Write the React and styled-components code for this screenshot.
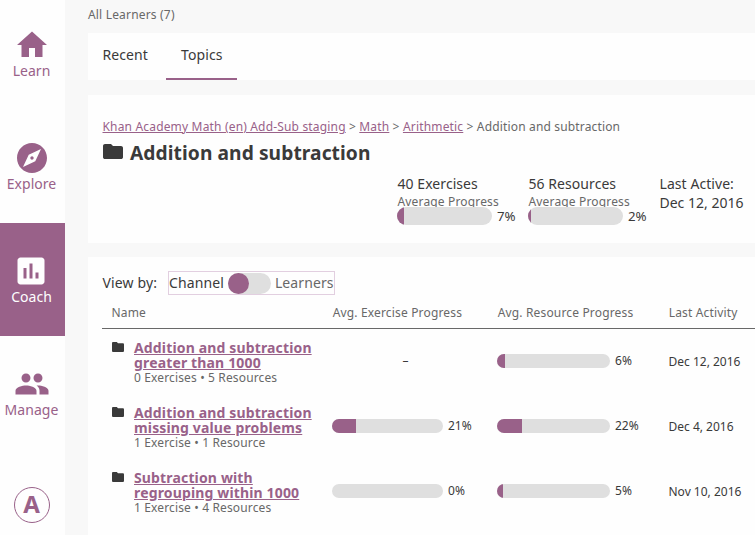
import React from 'react';
import styled, { createGlobalStyle } from 'styled-components';

const purple = '#996189';
const dark = '#3a3a3a';
const grey = '#686868';
const track = '#dfdfdf';

const GlobalStyle = createGlobalStyle`
  * { box-sizing: border-box; }
  body {
    margin: 0;
    overflow: hidden;
    background: #f8f8f8;
    color: ${dark};
    font-family: "Noto Sans", sans-serif;
    font-size: 14px;
  }
`;

const Page = styled.div`
  display: flex;
  height: 535px;
  overflow: hidden;
`;

const Sidebar = styled.nav`
  display: flex;
  flex-direction: column;
  width: 65px;
  flex: none;
  background: #fefefe;
`;

const NavItem = styled.a`
  display: flex;
  flex-direction: column;
  align-items: center;
  flex: none;
  height: 113px;
  padding: 30px 2px 0 0;
  line-height: 19px;
  color: ${(p) => (p.$active ? '#fefefe' : purple)};
  background: ${(p) => (p.$active ? purple : 'transparent')};

  &:first-child { margin-top: -3px; }
`;

const NavLabel = styled.span`
  margin-top: -2px;
  letter-spacing: 0.04px;
`;

const Icon = styled.svg`
  display: block;
  flex: none;
  width: ${(p) => p.$size}px;
  height: ${(p) => p.$size}px;
  margin-left: ${(p) => p.$shift}px;
  fill: currentColor;
`;

const Avatar = styled.div`
  width: 36px;
  height: 36px;
  margin: 38px 0 0 14px;
  padding-right: 1px;
  border: 1px solid ${purple};
  border-radius: 50%;
  color: ${purple};
  font-size: 24px;
  font-weight: 700;
  line-height: 32px;
  text-align: center;
`;

const Main = styled.main`
  flex: none;
  width: 690px;
  padding: 6px 0 0 23px;
`;

const Context = styled.div`
  height: 27px;
  font-size: 12px;
  letter-spacing: 0.18px;
  line-height: 17px;
  color: ${grey};
`;

const Card = styled.section`
  background: #fefefe;
`;

const Tabs = styled(Card)`
  display: flex;
  gap: 4px;
  height: 47px;
  margin-bottom: 15px;
`;

const Tab = styled.a`
  width: ${(p) => (p.$active ? 71 : 74)}px;
  padding: 12px 0 0 ${(p) => (p.$active ? 15 : 14.5)}px;
  line-height: 20px;
  letter-spacing: 0.1px;
  border-bottom: 2px solid ${(p) => (p.$active ? purple : 'transparent')};
`;

const Summary = styled(Card)`
  height: 148px;
  margin-bottom: 14px;
  padding: 23px 0 0 14.5px;
`;

const Crumbs = styled.div`
  font-size: 12px;
  letter-spacing: 0.155px;
  line-height: 17px;
  color: ${grey};
`;

const CrumbLink = styled.a`
  color: ${purple};
  letter-spacing: 0.17px;
  text-decoration: underline;
`;

const Title = styled.h1`
  display: flex;
  gap: 7px;
  margin: 5px 0 0;
  padding-left: 0.5px;
  font-size: 19.2px;
  letter-spacing: 0.08px;
  line-height: 26px;
`;

const Stats = styled.div`
  display: flex;
  margin: 8px 0 0 294.5px;
  line-height: 19px;
  letter-spacing: 0.06px;
`;

const Stat = styled.div`
  flex: none;
  width: 131px;
`;

const StatText = styled.div`
  padding-left: 0.5px;
`;

const StatDate = styled(StatText)`
  letter-spacing: 0;
`;

const StatCaption = styled.div`
  height: 14px;
  padding-left: 0.5px;
  font-size: 12px;
  letter-spacing: 0.16px;
  line-height: 17px;
  color: ${grey};
`;

const Meter = styled.div`
  display: flex;
  align-items: center;
  gap: 5px;
  font-size: ${(p) => (p.$large ? 13.3 : 12)}px;
  line-height: 18px;
  letter-spacing: 0;
`;

const Track = styled.div`
  flex: none;
  width: ${(p) => p.$width}px;
  height: ${(p) => (p.$large ? 18 : 14)}px;
  border-radius: 9px;
  overflow: hidden;
  background: ${track};
`;

const Fill = styled.div`
  height: 100%;
  background: ${purple};
`;

const Report = styled(Card)`
  height: 278px;
  padding: 14px 0 0 14px;
`;

const ViewBy = styled.div`
  display: flex;
  align-items: center;
  height: 24px;
`;

const ViewLabel = styled.span`
  width: 66px;
  padding-left: 0.5px;
  line-height: 20px;
  letter-spacing: 0.15px;
  margin-top: -1px;
`;

const Toggle = styled.div`
  display: flex;
  align-items: center;
  width: 167px;
  height: 24px;
  border: 1px solid #e2cfe0;
  line-height: 20px;
  letter-spacing: 0.1px;
`;

const Switch = styled.span`
  flex: none;
  width: 43px;
  height: 21px;
  margin: 0 4px;
  border-radius: 11px;
  background: ${track};
`;

const Knob = styled.span`
  display: block;
  width: 21px;
  height: 21px;
  border-radius: 50%;
  background: ${purple};
`;

const Muted = styled.span`
  color: ${grey};
`;

const Row = styled.div`
  display: grid;
  grid-template-columns: 230px 165px 171px 90px;
  height: 65px;
  font-size: 12px;
`;

const HeaderRow = styled(Row)`
  height: 34px;
  padding-top: 9px;
  line-height: 17px;
  letter-spacing: 0.16px;
  color: ${grey};
  border-bottom: 1px solid ${grey};
`;

const HeaderCell = styled.div`
  padding-left: ${(p) => (p.$first ? 9.5 : 0.7)}px;
  white-space: nowrap;
`;

const NameCell = styled.div`
  display: flex;
  gap: 8px;
  padding: 11px 0 0 10px;
`;

const FolderSlot = styled.span`
  flex: none;
  width: 14px;
`;

const TopicLink = styled.a`
  display: block;
  width: 190px;
  font-size: 14px;
  font-weight: 700;
  line-height: 15px;
  letter-spacing: 0.15px;
  color: ${purple};
  text-decoration: underline;
`;

const Counts = styled.div`
  line-height: 15px;
  letter-spacing: 0.14px;
  color: ${grey};
`;

const Cell = styled.div`
  padding-top: 23px;
  line-height: 18px;
`;

const DateCell = styled(Cell)`
  padding: 24px 0 0 0.5px;
`;

const Dash = styled.div`
  width: 147px;
  text-align: center;
`;

const paths = {
  home: 'M10 20v-6h4v6h5v-8h3L12 3 2 12h3v8z',
  explore:
    'M12 10.9c-.61 0-1.1.49-1.1 1.1s.49 1.1 1.1 1.1c.61 0 1.1-.49 1.1-1.1s-.49-1.1-1.1-1.1zM12 2C6.48 2 2 6.48 2 12s4.48 10 10 10 10-4.48 10-10S17.52 2 12 2zm2.19 12.19L6 18l3.81-8.19L18 6l-3.81 8.19z',
  coach:
    'M19 3H5c-1.1 0-2 .9-2 2v14c0 1.1.9 2 2 2h14c1.1 0 2-.9 2-2V5c0-1.1-.9-2-2-2zM9 17H7v-7h2v7zm4 0h-2V7h2v10zm4 0h-2v-4h2v4z',
  people:
    'M16 11c1.66 0 2.99-1.34 2.99-3S17.66 5 16 5c-1.66 0-3 1.34-3 3s1.34 3 3 3zm-8 0c1.66 0 2.99-1.34 2.99-3S9.66 5 8 5C6.34 5 5 6.34 5 8s1.34 3 3 3zm0 2c-2.33 0-7 1.17-7 3.5V19h14v-2.5c0-2.33-4.67-3.5-7-3.5zm8 0c-.29 0-.62.02-.97.05 1.16.84 1.97 1.97 1.97 3.45V19h6v-2.5c0-2.33-4.67-3.5-7-3.5z',
  folder:
    'M10 4H4c-1.1 0-1.99.9-1.99 2L2 18c0 1.1.9 2 2 2h16c1.1 0 2-.9 2-2V8c0-1.1-.9-2-2-2h-8l-2-2z',
};

const Glyph = ({ name, size, shift }) => (
  <Icon viewBox="0 0 24 24" $size={size} $shift={shift}>
    <path d={paths[name]} />
  </Icon>
);

const FolderIcon = styled.svg`
  display: block;
  flex: none;
  width: ${(p) => p.$w}px;
  height: ${(p) => p.$h}px;
  margin-top: ${(p) => p.$top}px;
  fill: ${dark};
`;

const Folder = ({ w, h, top }) => (
  <FolderIcon viewBox="2 4 20 16" preserveAspectRatio="none" $w={w} $h={h} $top={top}>
    <path d={paths.folder} />
  </FolderIcon>
);

const Progress = ({ value, width, large }) => (
  <Meter $large={large}>
    <Track $width={width} $large={large}>
      <Fill style={{ width: Math.ceil((value * width) / 100 + (value && value < 7 ? 0.3 : 0)) }} />
    </Track>
    <span>{value}%</span>
  </Meter>
);

const nav = [
  { label: 'Learn', icon: 'home', shift: 1 },
  { label: 'Explore', icon: 'explore', shift: 1 },
  { label: 'Coach', icon: 'coach', shift: -1, active: true },
  { label: 'Manage', icon: 'people', shift: 1 },
];

const topics = [
  { lines: ['Addition and subtraction', 'greater than 1000'], counts: '0 Exercises • 5 Resources', exercise: null, resource: 6, date: 'Dec 12, 2016' },
  { lines: ['Addition and subtraction', 'missing value problems'], counts: '1 Exercise • 1 Resource', exercise: 21, resource: 22, date: 'Dec 4, 2016' },
  { lines: ['Subtraction with', 'regrouping within 1000'], counts: '1 Exercise • 4 Resources', exercise: 0, resource: 5, date: 'Nov 10, 2016' },
];

export default function App() {
  return (
    <Page>
      <GlobalStyle />
      <Sidebar>
        {nav.map((n) => (
          <NavItem key={n.label} $active={n.active}>
            <Glyph name={n.icon} size={36} shift={n.shift} />
            <NavLabel>{n.label}</NavLabel>
          </NavItem>
        ))}
        <Avatar>A</Avatar>
      </Sidebar>
      <Main>
        <Context>All Learners (7)</Context>
        <Tabs>
          <Tab>Recent</Tab>
          <Tab $active>Topics</Tab>
        </Tabs>
        <Summary>
          <Crumbs>
            <CrumbLink>Khan Academy Math (en) Add-Sub staging</CrumbLink> &gt; <CrumbLink>Math</CrumbLink> &gt;{' '}
            <CrumbLink>Arithmetic</CrumbLink> &gt; Addition and subtraction
          </Crumbs>
          <Title>
            <Folder w={20} h={15} top={4} />
            Addition and subtraction
          </Title>
          <Stats>
            <Stat>
              <StatText>40 Exercises</StatText>
              <StatCaption>Average Progress</StatCaption>
              <Progress value={7} width={95} large />
            </Stat>
            <Stat>
              <StatText>56 Resources</StatText>
              <StatCaption>Average Progress</StatCaption>
              <Progress value={2} width={95} large />
            </Stat>
            <Stat>
              <StatText>Last Active:</StatText>
              <StatDate>Dec 12, 2016</StatDate>
            </Stat>
          </Stats>
        </Summary>
        <Report>
          <ViewBy>
            <ViewLabel>View by:</ViewLabel>
            <Toggle>
              <span>Channel</span>
              <Switch>
                <Knob />
              </Switch>
              <Muted>Learners</Muted>
            </Toggle>
          </ViewBy>
          <HeaderRow>
            <HeaderCell $first>Name</HeaderCell>
            <HeaderCell>Avg. Exercise Progress</HeaderCell>
            <HeaderCell>Avg. Resource Progress</HeaderCell>
            <HeaderCell>Last Activity</HeaderCell>
          </HeaderRow>
          {topics.map((t) => (
            <Row key={t.lines[1]}>
              <NameCell>
                <FolderSlot>
                  <Folder w={12} h={10} top={2} />
                </FolderSlot>
                <div>
                  <TopicLink>
                    {t.lines[0]}
                    <br />
                    {t.lines[1]}
                  </TopicLink>
                  <Counts>{t.counts}</Counts>
                </div>
              </NameCell>
              <Cell>
                {t.exercise === null ? <Dash>–</Dash> : <Progress value={t.exercise} width={111} />}
              </Cell>
              <Cell>
                <Progress value={t.resource} width={113} />
              </Cell>
              <DateCell>{t.date}</DateCell>
            </Row>
          ))}
        </Report>
      </Main>
    </Page>
  );
}
